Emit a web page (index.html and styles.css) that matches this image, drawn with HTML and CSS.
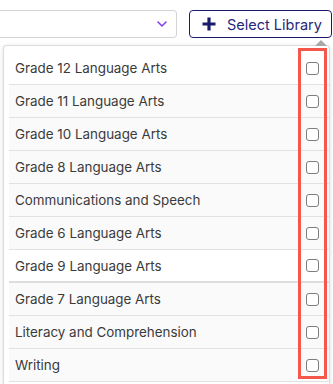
FILE: index.html
```html
<!DOCTYPE html>
<html>
<head>
<meta charset="utf-8">
<link rel="stylesheet" href="styles.css">
</head>
<body>
<div class="page">
  <div class="toolbar">
    <div class="select">
      <svg class="chev" width="10" height="6" viewBox="0 0 10 6"><path d="M1 1 L5 5 L9 1" fill="none" stroke="#7b3ff2" stroke-width="1.5" stroke-linecap="round" stroke-linejoin="round"/></svg>
    </div>
    <button class="lib-btn">
      <svg class="plus" width="16" height="16" viewBox="0 0 16 16"><path d="M8 1.5 V14.5 M1.5 8 H14.5" stroke="#1b1b6e" stroke-width="3.2" stroke-linecap="butt"/></svg>
      <span>Select Library</span>
    </button>
  </div>
  <div class="panel">
    <div class="caret"></div>
    <ul class="list">
      <li class="row white"><span>Grade 12 Language Arts</span><i class="box"></i></li>
      <li class="row"><span>Grade 11 Language Arts</span><i class="box"></i></li>
      <li class="row"><span>Grade 10 Language Arts</span><i class="box"></i></li>
      <li class="row"><span>Grade 8 Language Arts</span><i class="box"></i></li>
      <li class="row"><span>Communications and Speech</span><i class="box"></i></li>
      <li class="row"><span>Grade 6 Language Arts</span><i class="box"></i></li>
      <li class="row white thick"><span>Grade 9 Language Arts</span><i class="box"></i></li>
      <li class="row"><span>Grade 7 Language Arts</span><i class="box"></i></li>
      <li class="row"><span>Literacy and Comprehension</span><i class="box"></i></li>
      <li class="row"><span>Writing</span><i class="box"></i></li>
    </ul>
    <div class="highlight"></div>
  </div>
</div>
</body>
</html>
```

FILE: styles.css
```css
html, body {
  margin: 0;
  padding: 0;
  background: #ffffff;
  overflow: hidden;
}
body {
  font-family: Inter, "Liberation Sans", sans-serif;
  width: 333px;
  height: 384px;
  background: linear-gradient(to right, #e9ecef 0 3px, #ffffff 3px 330px, #e4e4e4 330px);
}
.page {
  padding-top: 10px;
  background: #fff;
}
.toolbar {
  display: flex;
  align-items: center;
  gap: 12px;
  height: 28px;
}
.select {
  box-sizing: border-box;
  width: 177px;
  height: 28px;
  border: 1px solid #d4d4d4;
  border-left: none;
  border-radius: 0 4px 4px 0;
  display: flex;
  align-items: center;
  justify-content: flex-end;
  padding-right: 9px;
}
.chev {
  display: block;
}
.lib-btn {
  box-sizing: border-box;
  width: 143px;
  height: 28px;
  border: 1px solid #1b1b6e;
  border-radius: 4px;
  background: #fff;
  display: flex;
  align-items: center;
  gap: 10px;
  padding: 0 0 0 11px;
  margin: 0;
  font-family: Inter, "Liberation Sans", sans-serif;
  font-size: 14.5px;
  color: #26267c;
}
.plus {
  display: block;
  flex: none;
}
.panel {
  position: relative;
  box-sizing: border-box;
  margin: 7px 0 0 3px;
  width: 327px;
  height: 340px;
  border: 1px solid #dcdcdc;
  border-bottom: none;
  border-radius: 4px 4px 0 0;
  background: #fff;
  box-shadow: 0 1px 5px rgba(0, 0, 0, 0.12);
  padding: 6px 0 0 5px;
}
.caret {
  position: absolute;
  top: -6px;
  right: 2px;
  width: 0;
  height: 0;
  border-left: 6px solid transparent;
  border-right: 6px solid transparent;
  border-bottom: 6px solid #a9a9a9;
}
.list {
  list-style: none;
  margin: 0;
  padding: 0;
}
.row {
  box-sizing: border-box;
  height: 33px;
  display: flex;
  align-items: center;
  justify-content: space-between;
  padding: 0 10px 0 6px;
  border-bottom: 1px solid #e2e2e2;
  background: #fafafa;
  font-size: 13.4px;
  color: #3a3a3a;
}
.row.white {
  background: #ffffff;
}
.row.thick {
  border-bottom: 2px solid #dedede;
}
.box {
  box-sizing: border-box;
  width: 13px;
  height: 13px;
  border: 1.5px solid #7d7d7d;
  border-radius: 3px;
  background: #fff;
  flex: none;
}
.highlight {
  position: absolute;
  left: 294px;
  top: 2px;
  width: 29px;
  height: 331px;
  box-sizing: border-box;
  border: 3.5px solid #f5584a;
}
```
